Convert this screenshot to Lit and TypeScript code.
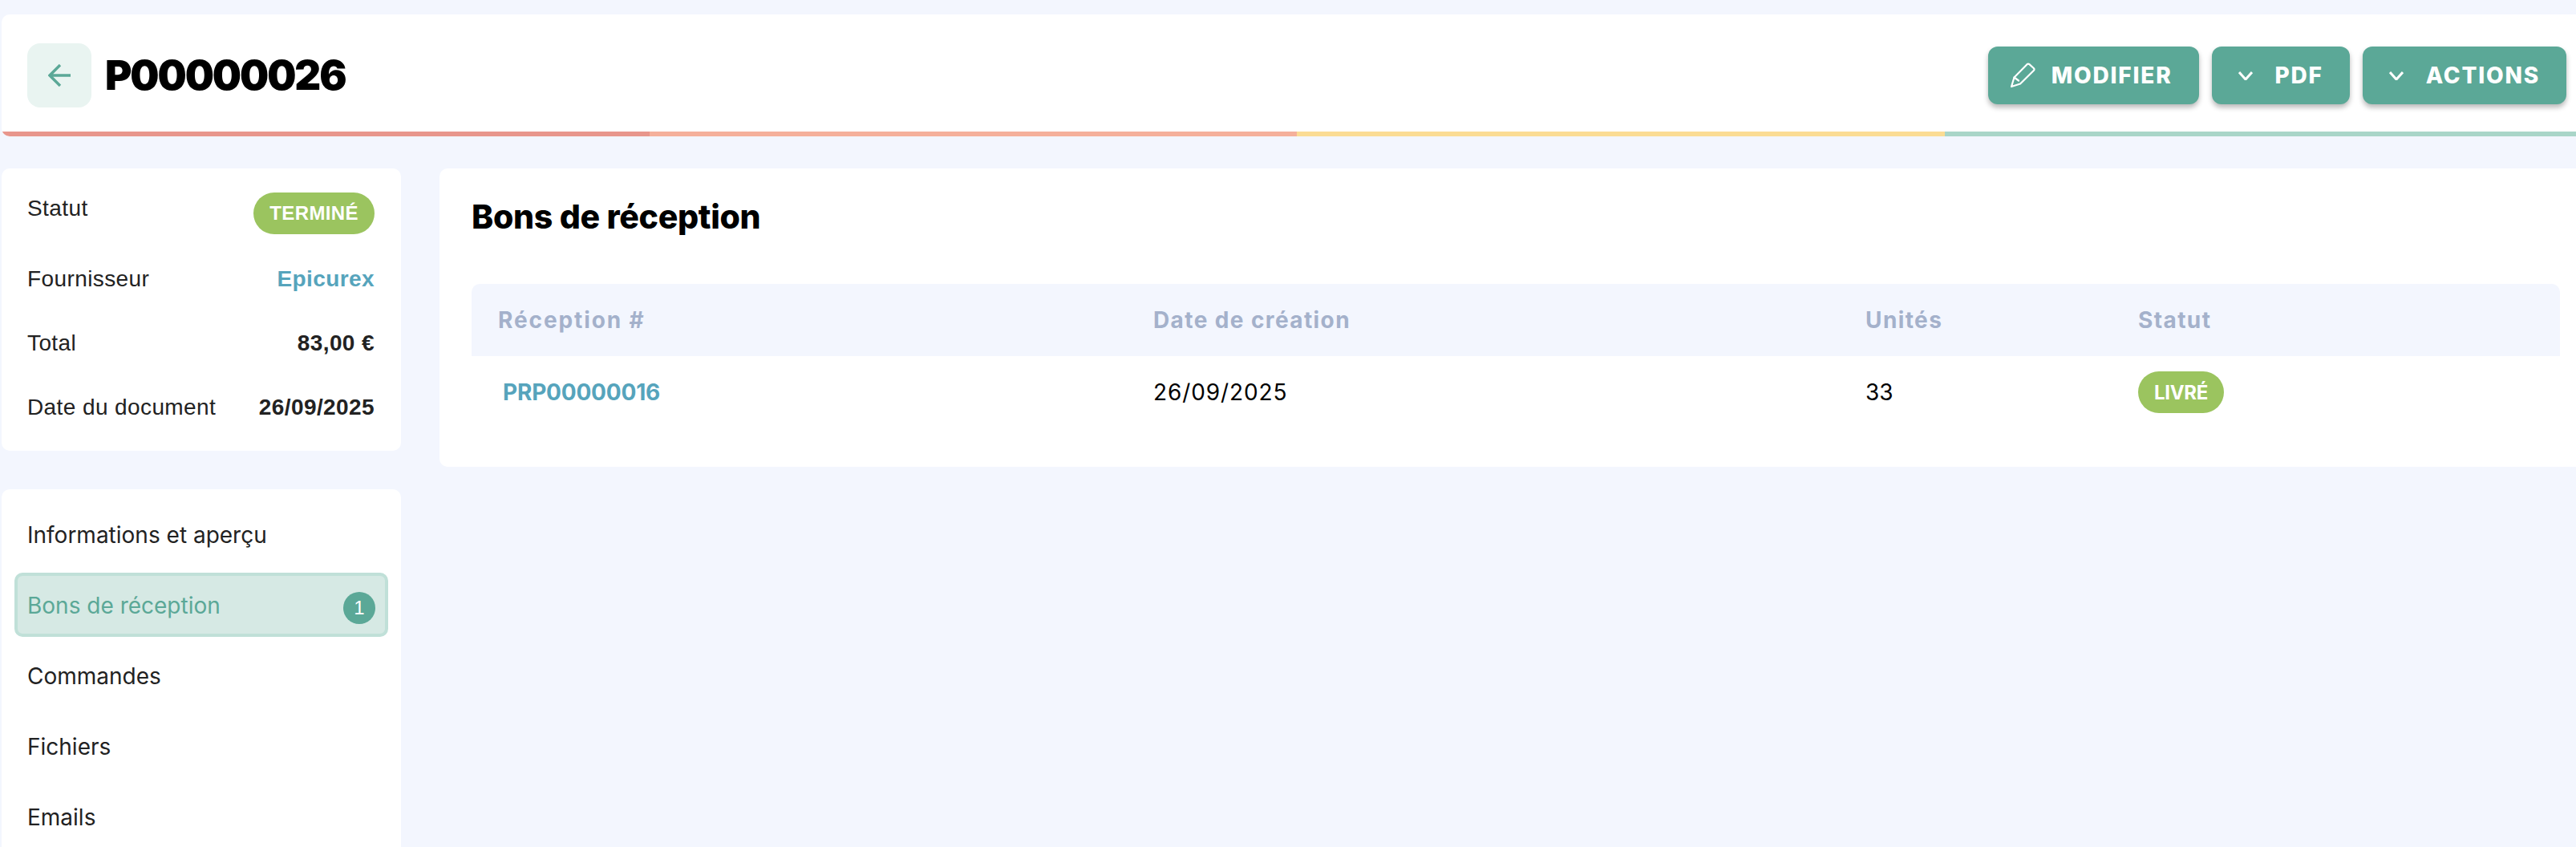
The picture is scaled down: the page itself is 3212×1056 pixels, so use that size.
import { LitElement, html, css } from "lit";
import { customElement } from "lit/decorators.js";

const chevron = html`<svg class="chev" viewBox="0 0 18 11" width="18" height="11" fill="none" stroke="currentColor" stroke-width="3"><path d="M1 1L9 10L17 1"/></svg>`;
const pencil = html`<svg class="pen" viewBox="0 0 32 32" width="32" height="32" fill="none" stroke="currentColor" stroke-width="2.2" stroke-linejoin="round" stroke-linecap="round"><path d="M2 30L5.5 18.5L21.5 2.2Q23 1 24.4 2.2L30 7.2Q31 8.5 30 9.8L13 26.5Z"/><path d="M5.5 18.5L11 22.5"/></svg>`;
const arrow = html`<svg viewBox="0 0 28 28" width="28" height="28" fill="none" stroke="currentColor" stroke-width="3.4"><path d="M28 14H2M15 1L2 14L15 27"/></svg>`;

@customElement("app-root")
export class AppRoot extends LitElement {
  static styles = css`
    :host { display: block; width: 3212px; height: 1056px; overflow: hidden; background: #f3f6fe; font-family: Inter, "Liberation Sans", sans-serif; color: #000; }
    .page { width: 3230px; margin-left: 2px; padding-top: 18px; box-sizing: border-box; }
    .head { background: #fff; border-radius: 10px; overflow: hidden; }
    .head-row { height: 146px; box-sizing: border-box; padding: 6px 32px 0; display: flex; align-items: center; }
    .back { width: 80px; height: 80px; border-radius: 16px; background: #e9f4f1; color: #5ba897; display: flex; align-items: center; justify-content: center; margin-right: 17px; }
    h1 { margin: 0; font-size: 51px; font-weight: 900; letter-spacing: -2.1px; line-height: 60px; }
    .btns { margin-left: auto; display: flex; gap: 16px; }
    .btn { height: 72px; box-sizing: border-box; padding: 0 33px; display: flex; align-items: center; background: #5ba897; color: #fff; border-radius: 12px; box-shadow: 0 4px 6px rgba(0,0,0,.28); font-size: 28px; font-weight: 800; letter-spacing: 1.8px; }
    .btn.edit { padding-left: 27px; }
    .pen { margin-right: 20px; }
    .chev { margin-right: 28px; }
    .bar { display: flex; height: 6px; }
    .bar i { flex: 1; }
    .c1 { background: #e8968c; } .c2 { background: #f5b09b; } .c3 { background: #fbdc94; } .c4 { background: #a9d5c8; }
    .body { display: grid; grid-template-columns: 498px 1fr; gap: 48px; margin-top: 40px; align-items: start; }
    .side { display: flex; flex-direction: column; gap: 48px; }
    .card { background: #fff; border-radius: 10px; }
    .info { padding: 30px 33px 34px 32px; display: flex; flex-direction: column; gap: 40px; font-family: "Liberation Sans", Arial, sans-serif; font-size: 28px; letter-spacing: .4px; color: #222; }
    .row { display: flex; justify-content: space-between; align-items: flex-start; line-height: 40px; }
    .row b { font-weight: 700; }
    .row .link { color: #56a4bc; }
    .pill { background: #9bc45f; color: #fff; border-radius: 26px; height: 52px; display: flex; align-items: center; font-weight: 700; }
    .pill.big { padding: 0 20px; font-size: 24px; letter-spacing: .4px; margin-bottom: -4px; }
    .pill.small { padding: 0 20px; font-family: Inter, sans-serif; font-size: 24px; letter-spacing: -.3px; width: max-content; box-sizing: border-box; }
    .nav { padding: 16px 16px 40px; display: flex; flex-direction: column; gap: 8px; font-size: 28px; color: #222; height: 560px; box-sizing: border-box; }
    .item { height: 80px; flex: none; box-sizing: border-box; border: 4px solid transparent; border-radius: 10px; padding: 2px 12px 0 12px; display: flex; align-items: center; justify-content: space-between; }
    .item.on { background: #d6e9e4; border-color: #c0e0d8; color: #5ba897; }
    .count { width: 40px; height: 40px; margin-top: 6px; border-radius: 50%; background: #5ba897; color: #fff; display: flex; align-items: center; justify-content: center; font: 24px "Liberation Sans", sans-serif; }
    .main { padding: 20px 40px 48px; }
    h2 { margin: 0 0 44px; font-size: 41px; font-weight: 800; letter-spacing: -.3px; line-height: 80px; height: 80px; }
    .table { display: grid; grid-template-columns: 817px 888px 338px 1fr; }
    .th { height: 90px; background: #f3f6fe; padding-left: 33px; display: flex; align-items: center; color: #a4b1cb; font-size: 28px; font-weight: 700; letter-spacing: 1.4px; }
    .th:first-child { border-top-left-radius: 10px; letter-spacing: 1.9px; }
    .th:nth-child(4) { border-top-right-radius: 10px; padding-left: 35px; }
    .td { height: 90px; padding-left: 33px; display: flex; align-items: center; font-size: 28px; letter-spacing: .9px; }
    .td.code { padding-left: 39px; color: #56a4bc; font-weight: 700; letter-spacing: -.2px; }
    .td.num { letter-spacing: 0; }
    .td.st { padding-left: 35px; }
  `;

  render() {
    return html`<div class="page">
      <header class="head">
        <div class="head-row">
          <div class="back">${arrow}</div>
          <h1>P00000026</h1>
          <div class="btns">
            <div class="btn edit">${pencil}MODIFIER</div>
            <div class="btn">${chevron}PDF</div>
            <div class="btn">${chevron}ACTIONS</div>
          </div>
        </div>
        <div class="bar"><i class="c1"></i><i class="c2"></i><i class="c3"></i><i class="c4"></i></div>
      </header>
      <div class="body">
        <aside class="side">
          <section class="card info">
            <div class="row"><span>Statut</span><span class="pill big">TERMINÉ</span></div>
            <div class="row"><span>Fournisseur</span><b class="link">Epicurex</b></div>
            <div class="row"><span>Total</span><b>83,00 €</b></div>
            <div class="row"><span>Date du document</span><b>26/09/2025</b></div>
          </section>
          <nav class="card nav">
            <div class="item">Informations et aperçu</div>
            <div class="item on">Bons de réception<span class="count">1</span></div>
            <div class="item">Commandes</div>
            <div class="item">Fichiers</div>
            <div class="item">Emails</div>
          </nav>
        </aside>
        <main class="card main">
          <h2>Bons de réception</h2>
          <div class="table">
            <div class="th">Réception #</div><div class="th">Date de création</div><div class="th">Unités</div><div class="th">Statut</div>
            <div class="td code">PRP00000016</div><div class="td">26/09/2025</div><div class="td num">33</div><div class="td st"><span class="pill small">LIVRÉ</span></div>
          </div>
        </main>
      </div>
    </div>`;
  }
}
